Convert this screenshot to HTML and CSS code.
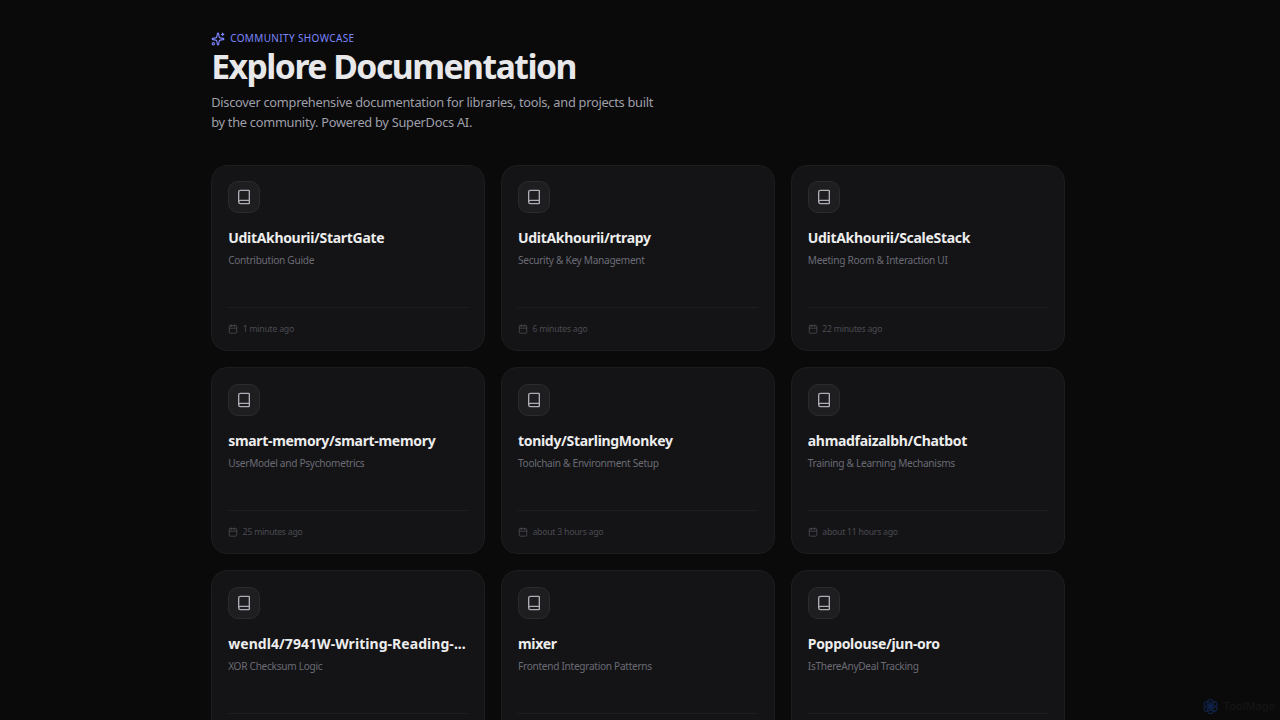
FILE: index.html
```html
<!DOCTYPE html>
<html lang="en">
<head>
    <meta charset="UTF-8">
    <meta name="viewport" content="width=device-width, initial-scale=1.0">
    <title>Explore Documentation</title>
    <link rel="stylesheet" href="styles.css">
</head>
<body>
    <!-- Shared icons -->
    <svg class="icon-defs">
        <symbol id="book" viewBox="0 0 24 24">
            <path d="M4 19.5v-15A2.5 2.5 0 0 1 6.500 2H19a1 1 0 0 1 1 1v18a1 1 0 0 1-1 1H6.500a1 1 0 0 1 0-5H20"/>
        </symbol>
        <symbol id="calendar" viewBox="0 0 24 24">
            <path d="M8 2v4M16 2v4M3 10h18"/>
            <rect width="18" height="18" x="3" y="4" rx="2"/>
        </symbol>
    </svg>

    <div class="container">
        <header class="page-header">
            <div class="eyebrow">
                <svg class="sparkles" viewBox="0 0 24 24">
                    <path d="M11.017 2.814a1 1 0 0 1 1.966 0l1.051 5.558a2 2 0 0 0 1.594 1.594l5.558 1.051a1 1 0 0 1 0 1.966l-5.558 1.051a2 2 0 0 0-1.594 1.594l-1.051 5.558a1 1 0 0 1-1.966 0l-1.051-5.558a2 2 0 0 0-1.594-1.594l-5.558-1.051a1 1 0 0 1 0-1.966l5.558-1.051a2 2 0 0 0 1.594-1.594z"/>
                    <path d="M20 2v4M22 4h-4"/>
                    <circle cx="4" cy="20" r="2"/>
                </svg>
                <span>COMMUNITY SHOWCASE</span>
            </div>
            <h1>Explore Documentation</h1>
            <p>Discover comprehensive documentation for libraries, tools, and projects built<br>by the community. Powered by SuperDocs AI.</p>
        </header>

        <div class="grid" id="docsGrid">
            <!-- Cards are inserted dynamically here -->
        </div>
    </div>

    <div class="watermark">
        <svg viewBox="0 0 24 24">
            <ellipse cx="12" cy="7.500" rx="4" ry="5.500"/>
            <ellipse cx="12" cy="7.500" rx="4" ry="5.500" transform="rotate(60 12 12)"/>
            <ellipse cx="12" cy="7.500" rx="4" ry="5.500" transform="rotate(120 12 12)"/>
            <ellipse cx="12" cy="7.500" rx="4" ry="5.500" transform="rotate(180 12 12)"/>
            <ellipse cx="12" cy="7.500" rx="4" ry="5.500" transform="rotate(240 12 12)"/>
            <ellipse cx="12" cy="7.500" rx="4" ry="5.500" transform="rotate(300 12 12)"/>
        </svg>
        <span>ToolMage</span>
    </div>

    <script>
        const docs = [
            { name: "UditAkhourii/StartGate", topic: "Contribution Guide", updated: "1 minute ago" },
            { name: "UditAkhourii/rtrapy", topic: "Security & Key Management", updated: "6 minutes ago" },
            { name: "UditAkhourii/ScaleStack", topic: "Meeting Room & Interaction UI", updated: "22 minutes ago" },
            { name: "smart-memory/smart-memory", topic: "UserModel and Psychometrics", updated: "25 minutes ago" },
            { name: "tonidy/StarlingMonkey", topic: "Toolchain & Environment Setup", updated: "about 3 hours ago" },
            { name: "ahmadfaizalbh/Chatbot", topic: "Training & Learning Mechanisms", updated: "about 11 hours ago" },
            { name: "wendl4/7941W-Writing-Reading-...", topic: "XOR Checksum Logic", updated: "" },
            { name: "mixer", topic: "Frontend Integration Patterns", updated: "" },
            { name: "Poppolouse/jun-oro", topic: "IsThereAnyDeal Tracking", updated: "" }
        ];

        function addText(parent, tag, className, text) {
            const el = document.createElement(tag);
            el.className = className;
            el.textContent = text;
            parent.appendChild(el);
            return el;
        }

        const grid = document.getElementById("docsGrid");
        docs.forEach(doc => {
            const card = document.createElement("article");
            card.className = "card";

            const icon = addText(card, "div", "card-icon", "");
            icon.innerHTML = '<svg><use href="#book"/></svg>';
            const title = addText(card, "h2", "card-title", doc.name);
            title.classList.toggle("long", doc.name.length > 30);
            addText(card, "p", "card-topic", doc.topic);

            const footer = addText(card, "div", "card-footer", "");
            footer.innerHTML = '<svg><use href="#calendar"/></svg>';
            addText(footer, "span", "card-date", doc.updated);
            grid.appendChild(card);
        });
    </script>
</body>
</html>
```
FILE: styles.css
```css
* {
    box-sizing: border-box;
}
body {
    margin: 0;
    height: 720px;
    overflow: hidden;
    background-color: #0a0a0a;
    color: #ededed;
    font-family: "Noto Sans", "Open Sans", sans-serif;
}
h1, h2, p {
    margin: 0;
}
svg {
    display: block;
    flex-shrink: 0;
    fill: none;
    stroke: currentColor;
    stroke-width: 2;
    stroke-linecap: round;
    stroke-linejoin: round;
}
.icon-defs {
    display: none;
}
.container {
    width: 853.400px;
    height: 720px;
    overflow: hidden;
    margin-left: 211.200px;
    padding-top: 31px;
}
.page-header {
    height: 133.600px;
}
.eyebrow {
    display: flex;
    align-items: center;
    gap: 5px;
    height: 15px;
    color: #7c86ff;
    font-size: 10px;
    letter-spacing: 0.360px;
    white-space: nowrap;
}
.eyebrow span {
    line-height: 13px;
    padding-bottom: 1px;
}
.sparkles {
    width: 14px;
    height: 14px;
}
.page-header h1 {
    margin-top: 3px;
    color: #e8e8ea;
    font-size: 33.700px;
    font-weight: 700;
    line-height: 34px;
    letter-spacing: -1.500px;
    white-space: nowrap;
}
.page-header p {
    margin-top: 10px;
    color: #9f9fa9;
    font-size: 12.800px;
    line-height: 19.500px;
    letter-spacing: -0.270px;
    white-space: nowrap;
}
.grid {
    display: grid;
    grid-template-columns: repeat(3, 1fr);
    grid-auto-rows: 186.700px;
    gap: 16px;
}
.card {
    display: flex;
    flex-direction: column;
    min-width: 0;
    padding: 15.700px 16px 15px;
    border: 1px solid #1d1d1f;
    border-radius: 16px;
    background-color: #141416;
}
.card-icon {
    display: flex;
    align-items: center;
    justify-content: center;
    width: 32px;
    height: 32px;
    border: 1px solid #2b2b2e;
    border-radius: 10px;
    background-color: #1e1e20;
    color: #adadb6;
}
.card-icon svg {
    width: 16px;
    height: 16px;
}
.card-title {
    margin-top: 15.200px;
    font-size: 14px;
    line-height: 19px;
    letter-spacing: -0.310px;
    white-space: nowrap;
}
.card-title.long {
    letter-spacing: 0.050px;
}
.card-topic {
    margin-top: 4.700px;
    color: #6b6b75;
    font-size: 10.100px;
    line-height: 16px;
    letter-spacing: -0.280px;
    white-space: nowrap;
}
.card-footer {
    display: flex;
    align-items: center;
    gap: 4.500px;
    height: 28px;
    margin-top: auto;
    padding-top: 15px;
    border-top: 1px solid #1e1e20;
    color: #4a4a52;
    font-size: 8.700px;
    line-height: 12px;
    letter-spacing: -0.240px;
}
.card-footer svg {
    width: 10px;
    height: 10px;
}
.watermark {
    position: absolute;
    top: 698px;
    left: 1202px;
    display: flex;
    align-items: center;
    gap: 4px;
    color: #151515;
    font-family: Inter, sans-serif;
    font-size: 11px;
    font-weight: 500;
    line-height: 17px;
}
.watermark svg {
    width: 17px;
    height: 17px;
    color: #10244c;
    stroke-width: 1.500;
}
```
